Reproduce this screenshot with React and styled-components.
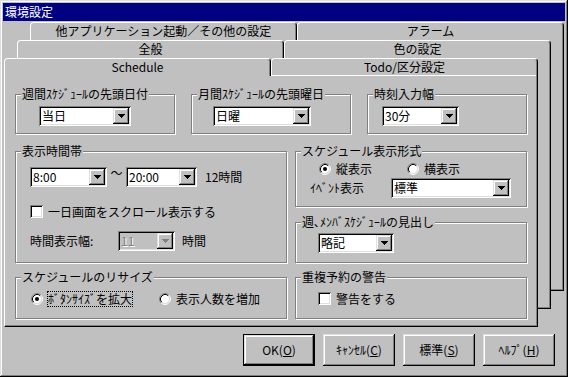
import React from 'react';
import styled, { createGlobalStyle, css } from 'styled-components';

const GlobalStyle = createGlobalStyle`
  html, body {
    margin: 0;
    padding: 0;
    background: #c0c0c0;
  }
  body {
    font-family: "Noto Sans CJK JP", "Liberation Sans", sans-serif;
    font-size: 12px;
    color: #000;
  }
  * { box-sizing: border-box; }
`;

const raised = css`
  box-shadow: inset -1px -1px #000, inset 1px 1px #dfdfdf, inset -2px -2px #808080, inset 2px 2px #fff;
`;

const sunken = css`
  box-shadow: inset 1px 1px #808080, inset -1px -1px #fff, inset 2px 2px #000, inset -2px -2px #dfdfdf;
`;

const Window = styled.div`
  width: 568px;
  height: 377px;
  padding: 3px;
  background: #c0c0c0;
  box-shadow: inset -1px -1px #000, inset 1px 1px #dfdfdf, inset -2px -2px #808080, inset 2px 2px #fff;
  display: flex;
  flex-direction: column;
`;

const TitleBar = styled.div`
  height: 18px;
  flex: none;
  background: #000080;
  color: #fff;
  padding-left: 2px;
  line-height: 18px;
`;

const Stack = styled.div`
  display: grid;
  height: 305px;
  flex: none;
  margin: 1px 1px 0 1px;
`;

const Sheet = styled.div`
  grid-area: 1 / 1;
  display: flex;
  flex-direction: column;
  margin: ${p => p.$top}px ${p => p.$right}px ${p => p.$bottom}px ${p => p.$left}px;
`;

const TabRow = styled.div`
  display: flex;
  height: 18px;
  flex: none;
`;

const Tab = styled.div`
  flex: 1;
  background: #c0c0c0;
  border-top: 1px solid #fff;
  border-left: 1px solid #fff;
  border-right: 1px solid #000;
  border-radius: 4px 4px 0 0;
  box-shadow: inset -1px 0 #808080${p => (p.$line ? ', inset 0 -1px #fff' : '')};
  text-align: center;
  line-height: 16px;
  white-space: nowrap;
`;

const Panel = styled.div`
  flex: 1;
  background: #c0c0c0;
  border-left: 1px solid #fff;
  border-right: 1px solid #000;
  border-bottom: 1px solid #000;
  box-shadow: inset -1px -1px #808080;
  padding: ${p => (p.$content ? '12px 0 0 10px' : '0')};
`;

const TopRow = styled.div`
  display: flex;
  gap: 16px;
`;

const Columns = styled.div`
  display: flex;
  gap: 8px;
  margin-top: 11px;
`;

const Column = styled.div`
  display: flex;
  flex-direction: column;
  width: ${p => p.$w}px;
`;

const Group = styled.fieldset`
  margin: ${p => p.$mt || 0}px 0 0 0;
  padding: 0;
  min-width: 0;
  width: ${p => (p.$w ? `${p.$w}px` : 'auto')};
  height: ${p => p.$h}px;
  border: 1px solid #808080;
  box-shadow: inset 1px 1px #fff, 1px 1px #fff;
`;

const Legend = styled.legend`
  margin-left: 5px;
  padding: 0 1px;
  line-height: 12px;
  background: #c0c0c0;
  white-space: nowrap;
`;

const Row = styled.div`
  display: flex;
  align-items: center;
  height: ${p => p.$h || 20}px;
  margin-top: ${p => p.$mt || 0}px;
  padding-left: ${p => p.$pl || 0}px;
`;

const Text = styled.span`
  line-height: 12px;
  white-space: nowrap;
  margin-left: ${p => p.$ml || 0}px;
  width: ${p => (p.$w ? `${p.$w}px` : 'auto')};
  flex: none;
`;

const Tilde = styled.span`
  width: 19px;
  text-align: center;
  line-height: 12px;
  align-self: flex-start;
`;

const ComboBox = styled.div`
  display: flex;
  width: ${p => p.$w}px;
  height: 20px;
  flex: none;
  padding: 2px;
  background: ${p => (p.$disabled ? '#c0c0c0' : '#fff')};
  ${sunken};
`;

const ComboValue = styled.span`
  flex: 1;
  padding-left: 1px;
  line-height: 16px;
  white-space: nowrap;
  color: ${p => (p.$disabled ? '#808080' : '#000')};
  text-shadow: ${p => (p.$disabled ? '1px 1px #fff' : 'none')};
`;

const DropButton = styled.span`
  width: 16px;
  background: #c0c0c0;
  display: flex;
  align-items: center;
  justify-content: center;
  ${raised};
`;

const CheckBox = styled.span`
  width: 13px;
  height: 13px;
  flex: none;
  background: #fff;
  ${sunken};
`;

const Option = styled.label`
  display: flex;
  align-items: center;
  gap: 5px;
  width: ${p => (p.$w ? `${p.$w}px` : 'auto')};
  flex: none;
`;

const FocusLabel = styled.span`
  margin-left: -1px;
  border: 1px dotted #000;
  padding: 1px 0;
  line-height: 12px;
  white-space: nowrap;
`;

const ButtonRow = styled.div`
  display: flex;
  justify-content: flex-end;
  gap: 8px;
  margin-top: 7px;
  padding-right: 10px;
`;

const Button = styled.button`
  width: 72px;
  height: 32px;
  padding: 0;
  font: inherit;
  color: #000;
  background: #c0c0c0;
  border: ${p => (p.$default ? '1px solid #000' : 'none')};
  ${raised};
  line-height: 12px;
  white-space: nowrap;
`;

const Arrow = ({ disabled }) => (
  <svg width="7" height="4" viewBox="0 0 7 4" shapeRendering="crispEdges">
    <path d="M0 0h7v1h-1v1h-1v1h-1v1h-1v-1h-1v-1h-1v-1h-1z" fill={disabled ? '#808080' : '#000'} />
  </svg>
);

const Combo = ({ w, value, disabled }) => (
  <ComboBox $w={w} $disabled={disabled}>
    <ComboValue $disabled={disabled}>{value}</ComboValue>
    <DropButton>
      <Arrow disabled={disabled} />
    </DropButton>
  </ComboBox>
);

const Radio = ({ checked }) => (
  <svg width="12" height="12" viewBox="0 0 12 12" style={{ flex: 'none' }}>
    <circle cx="6" cy="6" r="4.5" fill="#fff" />
    <path d="M2.11 9.89A5.5 5.5 0 0 1 9.89 2.11" fill="none" stroke="#808080" />
    <path d="M9.89 2.11A5.5 5.5 0 0 1 2.11 9.89" fill="none" stroke="#fff" />
    <path d="M2.82 9.18A4.5 4.5 0 0 1 9.18 2.82" fill="none" stroke="#000" />
    <path d="M9.18 2.82A4.5 4.5 0 0 1 2.82 9.18" fill="none" stroke="#dfdfdf" />
    {checked && <circle cx="6" cy="6" r="2" fill="#000" />}
  </svg>
);

const sheets = [
  { top: 0, left: 26, right: 0, bottom: 36, tabs: ['他アプリケーション起動／その他の設定', 'アラーム'] },
  { top: 18, left: 13, right: 13, bottom: 18, tabs: ['全般', '色の設定'] },
];

const SchedulePage = () => (
  <>
    <TopRow>
      <Group $w={160} $h={46}>
        <Legend>週間ｽｹｼﾞｭｰﾙの先頭日付</Legend>
        <Row $mt={6} $pl={23}>
          <Combo w={92} value="当日" />
        </Row>
      </Group>
      <Group $w={160} $h={46}>
        <Legend>月間ｽｹｼﾞｭｰﾙの先頭曜日</Legend>
        <Row $mt={6} $pl={21}>
          <Combo w={98} value="日曜" />
        </Row>
      </Group>
      <Group $w={160} $h={46}>
        <Legend>時刻入力幅</Legend>
        <Row $mt={6} $pl={14}>
          <Combo w={77} value="30分" />
        </Row>
      </Group>
    </TopRow>
    <Columns>
      <Column $w={272}>
        <Group $h={118}>
          <Legend>表示時間帯</Legend>
          <Row $mt={10} $pl={14}>
            <Combo w={77} value="8:00" />
            <Tilde>〜</Tilde>
            <Combo w={71} value="20:00" />
            <Text $ml={8}>12時間</Text>
          </Row>
          <Row $mt={18} $pl={14} $h={13}>
            <Option>
              <CheckBox />
              <Text>一日画面をスクロール表示する</Text>
            </Option>
          </Row>
          <Row $mt={13} $pl={14}>
            <Text $w={88}>時間表示幅:</Text>
            <Combo w={57} value="11" disabled />
            <Text $ml={7}>時間</Text>
          </Row>
        </Group>
        <Group $h={48} $mt={8}>
          <Legend>スケジュールのリサイズ</Legend>
          <Row $mt={8} $pl={15} $h={16}>
            <Option $w={128}>
              <Radio checked />
              <FocusLabel>ﾎﾞﾀﾝｻｲｽﾞを拡大</FocusLabel>
            </Option>
            <Option>
              <Radio />
              <Text>表示人数を増加</Text>
            </Option>
          </Row>
        </Group>
      </Column>
      <Column $w={232}>
        <Group $h={62}>
          <Legend>スケジュール表示形式</Legend>
          <Row $mt={4} $pl={23} $h={16}>
            <Option $w={88}>
              <Radio checked />
              <Text>縦表示</Text>
            </Option>
            <Option>
              <Radio />
              <Text>横表示</Text>
            </Option>
          </Row>
          <Row $mt={1} $pl={14}>
            <Text $w={81}>ｲﾍﾞﾝﾄ表示</Text>
            <Combo w={120} value="標準" />
          </Row>
        </Group>
        <Group $h={47} $mt={9}>
          <Legend>週､ﾒﾝﾊﾞｽｹｼﾞｭｰﾙの見出し</Legend>
          <Row $mt={5} $pl={22}>
            <Combo w={76} value="略記" />
          </Row>
        </Group>
        <Group $h={48} $mt={8}>
          <Legend>重複予約の警告</Legend>
          <Row $mt={9} $pl={22} $h={13}>
            <Option>
              <CheckBox />
              <Text>警告をする</Text>
            </Option>
          </Row>
        </Group>
      </Column>
    </Columns>
  </>
);

export default function App() {
  return (
    <>
      <GlobalStyle />
      <Window>
        <TitleBar>環境設定</TitleBar>
        <Stack>
          {sheets.map((s, i) => (
            <Sheet key={i} $top={s.top} $left={s.left} $right={s.right} $bottom={s.bottom}>
              <TabRow>
                {s.tabs.map(t => (
                  <Tab key={t}>{t}</Tab>
                ))}
              </TabRow>
              <Panel />
            </Sheet>
          ))}
          <Sheet $top={36} $left={0} $right={26} $bottom={0}>
            <TabRow>
              <Tab>Schedule</Tab>
              <Tab $line>Todo/区分設定</Tab>
            </TabRow>
            <Panel $content>
              <SchedulePage />
            </Panel>
          </Sheet>
        </Stack>
        <ButtonRow>
          <Button $default>OK(<u>O</u>)</Button>
          <Button>ｷｬﾝｾﾙ(<u>C</u>)</Button>
          <Button>標準(<u>S</u>)</Button>
          <Button>ﾍﾙﾌﾟ(<u>H</u>)</Button>
        </ButtonRow>
      </Window>
    </>
  );
}
